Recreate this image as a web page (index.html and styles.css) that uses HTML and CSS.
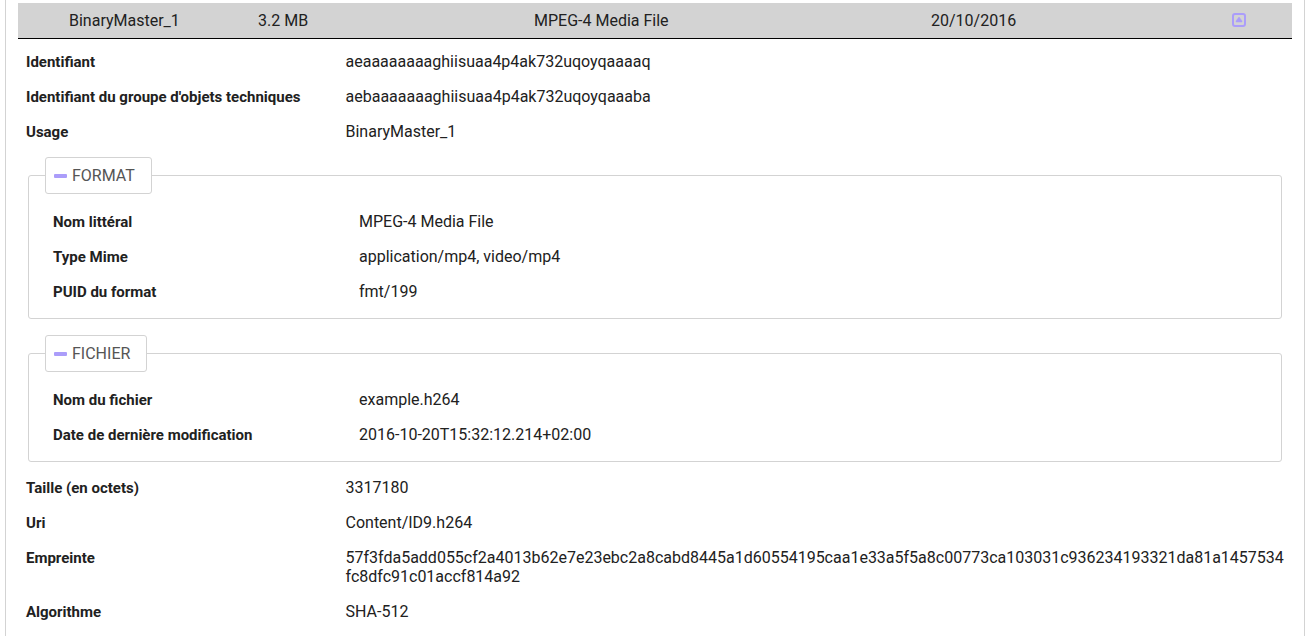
FILE: index.html
```
<!DOCTYPE html>
<html lang="fr">
<head>
<meta charset="utf-8">
<title>BinaryMaster_1</title>
<link rel="stylesheet" href="styles.css">
</head>
<body>
<main class="panel">
  <header class="object-header">
    <span>BinaryMaster_1</span>
    <span>3.2 MB</span>
    <span>MPEG-4 Media File</span>
    <span>20/10/2016</span>
    <button class="collapse" type="button" aria-label="Replier" aria-expanded="true">
      <svg width="14" height="14" viewBox="0 0 14 14" aria-hidden="true"><rect x="1" y="1" width="12" height="12" rx="2" fill="none" stroke="#ab9dfa" stroke-width="2"/><path d="M7 4 L10 8 V9 H4 V8 Z" fill="#ab9dfa" stroke="#ab9dfa" stroke-width="0.5"/></svg>
    </button>
  </header>

  <dl class="fields">
    <div class="field"><dt>Identifiant</dt><dd>aeaaaaaaaaghiisuaa4p4ak732uqoyqaaaaq</dd></div>
    <div class="field"><dt>Identifiant du groupe d'objets techniques</dt><dd>aebaaaaaaaghiisuaa4p4ak732uqoyqaaaba</dd></div>
    <div class="field"><dt>Usage</dt><dd>BinaryMaster_1</dd></div>
  </dl>

  <fieldset class="group">
    <legend class="group-legend"><button class="group-toggle" type="button" aria-expanded="true"><span class="minus"></span>FORMAT</button></legend>
    <dl class="fields-inner">
      <div class="field"><dt>Nom littéral</dt><dd>MPEG-4 Media File</dd></div>
      <div class="field"><dt>Type Mime</dt><dd>application/mp4, video/mp4</dd></div>
      <div class="field"><dt>PUID du format</dt><dd>fmt/199</dd></div>
    </dl>
  </fieldset>

  <fieldset class="group">
    <legend class="group-legend"><button class="group-toggle" type="button" aria-expanded="true"><span class="minus"></span>FICHIER</button></legend>
    <dl class="fields-inner">
      <div class="field"><dt>Nom du fichier</dt><dd>example.h264</dd></div>
      <div class="field"><dt>Date de dernière modification</dt><dd>2016-10-20T15:32:12.214+02:00</dd></div>
    </dl>
  </fieldset>

  <dl class="fields-inner">
    <div class="field"><dt>Taille (en octets)</dt><dd>3317180</dd></div>
    <div class="field"><dt>Uri</dt><dd>Content/ID9.h264</dd></div>
    <div class="field"><dt>Empreinte</dt><dd>57f3fda5add055cf2a4013b62e7e23ebc2a8cabd8445a1d60554195caa1e33a5f5a8c00773ca103031c936234193321da81a1457534fc8dfc91c01accf814a92</dd></div>
    <div class="field"><dt>Algorithme</dt><dd>SHA-512</dd></div>
  </dl>
</main>
</body>
</html>
```
FILE: styles.css
```
* {
  box-sizing: border-box;
}

body {
  margin: 0;
  background: #fff;
  color: #212121;
  font-family: Roboto, sans-serif;
  font-size: 16px;
  line-height: 19px;
}

.panel {
  min-height: 100vh;
  margin: 0 7px 0 5px;
  padding: 3px 12px 7px;
  border: solid #d3d3d3;
  border-width: 0 1px;
}

.object-header {
  display: grid;
  grid-template-columns: 189fr 276fr 397fr 301fr 60fr;
  align-items: center;
  height: 36px;
  padding-left: 51px;
  background: #d3d3d3;
  border-bottom: 1px solid #000;
}

.collapse {
  display: flex;
  width: 14px;
  padding: 0 0 1px;
  border: 0;
  background: none;
  cursor: pointer;
}

.fields {
  margin: 5px 0 8px;
}

.fields-inner {
  margin: 0;
}

.field {
  display: grid;
  grid-template-columns: 25% 75%;
}

dt,
dd {
  margin: 0;
}

dt {
  padding: 9px 8px 7px;
  font-size: 15px;
  font-weight: 700;
}

dd {
  padding: 8px 7px 8px 9px;
  overflow-wrap: anywhere;
}

.group {
  min-width: 0;
  margin: 0 10px 16px;
  padding: 10px 16px 9px;
  border: 1px solid #d3d3d3;
  border-radius: 3px;
}

.group + .fields-inner {
  margin-top: -8px;
}

.group-legend {
  padding: 0;
}

.group-toggle {
  display: flex;
  align-items: center;
  gap: 5px;
  height: 37px;
  padding: 0 16px 0 8px;
  border: 1px solid #d3d3d3;
  border-radius: 3px;
  background: #fff;
  color: #555;
  font: inherit;
  cursor: pointer;
}

.minus {
  width: 13px;
  height: 4px;
  border-radius: 1px;
  background: #ab9dfa;
}
```
